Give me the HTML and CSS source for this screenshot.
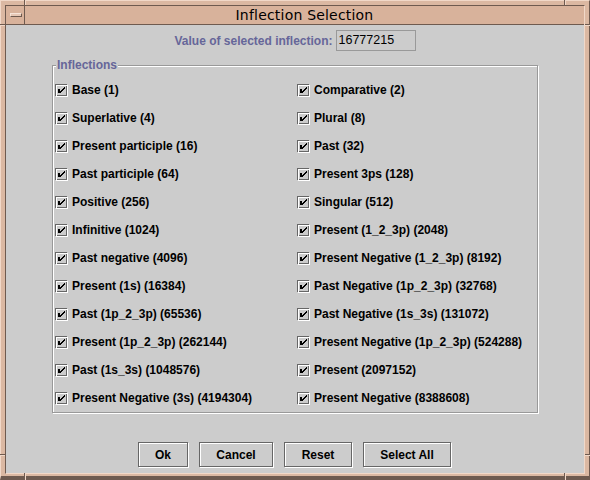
FILE: index.html
```html
<!DOCTYPE html>
<html>
<head>
<meta charset="utf-8">
<link rel="stylesheet" href="styles.css">
</head>
<body>
<div class="window">
  <span class="mark mv tl-v"></span>
  <span class="mark mh tl-h"></span>
  <span class="mark mv tr-v"></span>
  <span class="mark mh tr-h"></span>
  <span class="mark mh bl-h"></span>
  <span class="mark mv bl-v"></span>
  <span class="mark mh br-h"></span>
  <span class="mark mv br-v"></span>
  <div class="inner">
    <div class="titlebar">
      <div class="menubtn"><span class="menuglyph"></span></div>
      <div class="title">Inflection Selection</div>
    </div>
    <div class="content">
      <div class="valuerow">
        <span class="vlabel">Value of selected inflection:</span>
        <span class="field">16777215</span>
      </div>
      <div class="group">
        <span class="legend">Inflections</span>
        <div class="grid" id="grid"></div>
      </div>
      <div class="buttons">
        <button class="btn b-ok">Ok</button>
        <button class="btn b-cancel">Cancel</button>
        <button class="btn b-reset">Reset</button>
        <button class="btn b-all">Select All</button>
      </div>
    </div>
  </div>
</div>
<script src="script.js"></script>
</body>
</html>
```

FILE: script.js
```js
var labels = [
  "Base (1)", "Comparative (2)",
  "Superlative (4)", "Plural (8)",
  "Present participle (16)", "Past (32)",
  "Past participle (64)", "Present 3ps (128)",
  "Positive (256)", "Singular (512)",
  "Infinitive (1024)", "Present (1_2_3p) (2048)",
  "Past negative (4096)", "Present Negative (1_2_3p) (8192)",
  "Present (1s) (16384)", "Past Negative (1p_2_3p) (32768)",
  "Past (1p_2_3p) (65536)", "Past Negative (1s_3s) (131072)",
  "Present (1p_2_3p) (262144)", "Present Negative (1p_2_3p) (524288)",
  "Past (1s_3s) (1048576)", "Present (2097152)",
  "Present Negative (3s) (4194304)", "Present Negative (8388608)"
];
var svg = '<svg class="cb" width="13" height="13" viewBox="0 0 13 13" shape-rendering="crispEdges">' +
  '<path fill="#666666" d="M0 0h12v1H0zM0 0h1v12H0zM11 0h1v12h-1zM0 11h12v1H0z"/>' +
  '<path fill="#ffffff" d="M1 1h12v1H1zM1 1h1v12H1zM12 1h1v12h-1zM1 12h12v1H1z"/>' +
  '<path fill="#000000" d="M3 5h2v4H3zM9 3h1v2H9zM8 4h1v2H8zM7 5h1v2H7zM6 6h1v2H6zM5 7h1v2H5z"/>' +
  '</svg>';
var grid = document.getElementById("grid");
var html = "";
for (var i = 0; i < labels.length; i++) {
  html += '<div class="item">' + svg + '<span class="lbl">' + labels[i] + '</span></div>';
}
grid.innerHTML = html;
```

FILE: styles.css
```css
html, body {
  margin: 0;
  padding: 0;
  background: #cccccc;
}

.window {
  position: relative;
  box-sizing: border-box;
  width: 590px;
  height: 480px;
  background: #dbb8a2;
  border-top: 1px solid #f1d8c8;
  border-left: 1px solid #f1d8c8;
  border-right: 1px solid #6e5a4f;
  border-bottom: 4px solid #6e5a4f;
  padding: 4px 4px 2px 4px;
  display: flex;
  flex-direction: column;
}

.mark {
  position: absolute;
}
.mv {
  width: 2px;
  height: 5px;
  background: linear-gradient(to right, #6e5a4f 50%, #f1d8c8 50%);
}
.mh {
  width: 5px;
  height: 2px;
  background: linear-gradient(to bottom, #6e5a4f 50%, #f1d8c8 50%);
}
.tl-v { left: 23px; top: -1px; }
.tl-h { left: -1px; top: 23px; }
.tr-v { left: 563px; top: -1px; }
.tr-h { right: -1px; top: 23px; }
.bl-h { left: -1px; top: 453px; }
.bl-v { left: 23px; bottom: -4px; height: 7px; }
.br-h { right: -1px; top: 453px; }
.br-v { left: 563px; bottom: -4px; height: 7px; }

.inner {
  flex: 1;
  display: flex;
  flex-direction: column;
  border-top: 1px solid #6e5a4f;
  border-left: 1px solid #6e5a4f;
  border-right: 1px solid #f1d8c8;
  border-bottom: 1px solid #f1d8c8;
}

.titlebar {
  height: 18px;
  display: flex;
  background: #d8b29b;
  border-bottom: 1px solid #6e5a4f;
}

.menubtn {
  width: 18px;
  border-right: 1px solid #6e5a4f;
  display: flex;
  align-items: flex-start;
  justify-content: flex-start;
}

.menuglyph {
  display: block;
  box-sizing: border-box;
  width: 12px;
  height: 4px;
  margin: 7px 0 0 4px;
  background: #e6c8b6;
  border-top: 1px solid #f6e4d8;
  border-left: 1px solid #f6e4d8;
  border-right: 1px solid #6e5a4f;
  border-bottom: 1px solid #6e5a4f;
}

.title {
  flex: 1;
  text-align: center;
  font-family: "DejaVu Sans", sans-serif;
  font-size: 14px;
  letter-spacing: 0.2px;
  line-height: 19px;
  color: #000000;
}

.content {
  flex: 1;
  background: #cccccc;
  display: flex;
  flex-direction: column;
  padding-top: 5px;
}

.valuerow {
  display: flex;
  justify-content: center;
  align-items: center;
  gap: 3px;
  height: 21px;
}

.vlabel {
  font-family: "Liberation Sans", Arial, sans-serif;
  font-weight: bold;
  font-size: 12px;
  color: #666699;
}

.field {
  box-sizing: border-box;
  width: 80px;
  height: 21px;
  border: 1px solid #999999;
  padding-left: 2px;
  font-family: "Liberation Sans", Arial, sans-serif;
  font-size: 12.5px;
  line-height: 19px;
  color: #000000;
}

.group {
  position: relative;
  box-sizing: border-box;
  width: 486px;
  height: 348px;
  margin: 14px 0 0 46px;
  border: 1px solid #999999;
  box-shadow: inset 1px 1px 0 #ffffff, 1px 1px 0 #ffffff;
  padding: 10px 0 0 2px;
}

.legend {
  position: absolute;
  left: 3px;
  top: -8px;
  padding: 0 1px;
  background: #cccccc;
  font-family: "Liberation Sans", Arial, sans-serif;
  font-weight: bold;
  font-size: 12px;
  line-height: 14px;
  color: #666699;
}

.grid {
  display: grid;
  grid-template-columns: 242px 242px;
  grid-auto-rows: 28px;
}

.item {
  display: flex;
  align-items: center;
  gap: 4px;
}

.cb {
  display: block;
  flex: none;
}

.lbl {
  font-family: "Liberation Sans", Arial, sans-serif;
  font-weight: bold;
  font-size: 12px;
  color: #000000;
  white-space: nowrap;
}

.buttons {
  display: flex;
  justify-content: center;
  gap: 11px;
  margin-top: 29px;
  padding-right: 1px;
}

.btn {
  box-sizing: border-box;
  height: 25px;
  margin: 0;
  padding: 0;
  background: #cccccc;
  border: 1px solid #666666;
  border-radius: 0;
  box-shadow: inset 1px 1px 0 #ffffff, 1px 1px 0 #ffffff;
  font-family: "Liberation Sans", Arial, sans-serif;
  font-weight: bold;
  font-size: 12px;
  color: #000000;
}
.b-ok { width: 50px; }
.b-cancel { width: 74px; }
.b-reset { width: 68px; }
.b-all { width: 88px; }
```
